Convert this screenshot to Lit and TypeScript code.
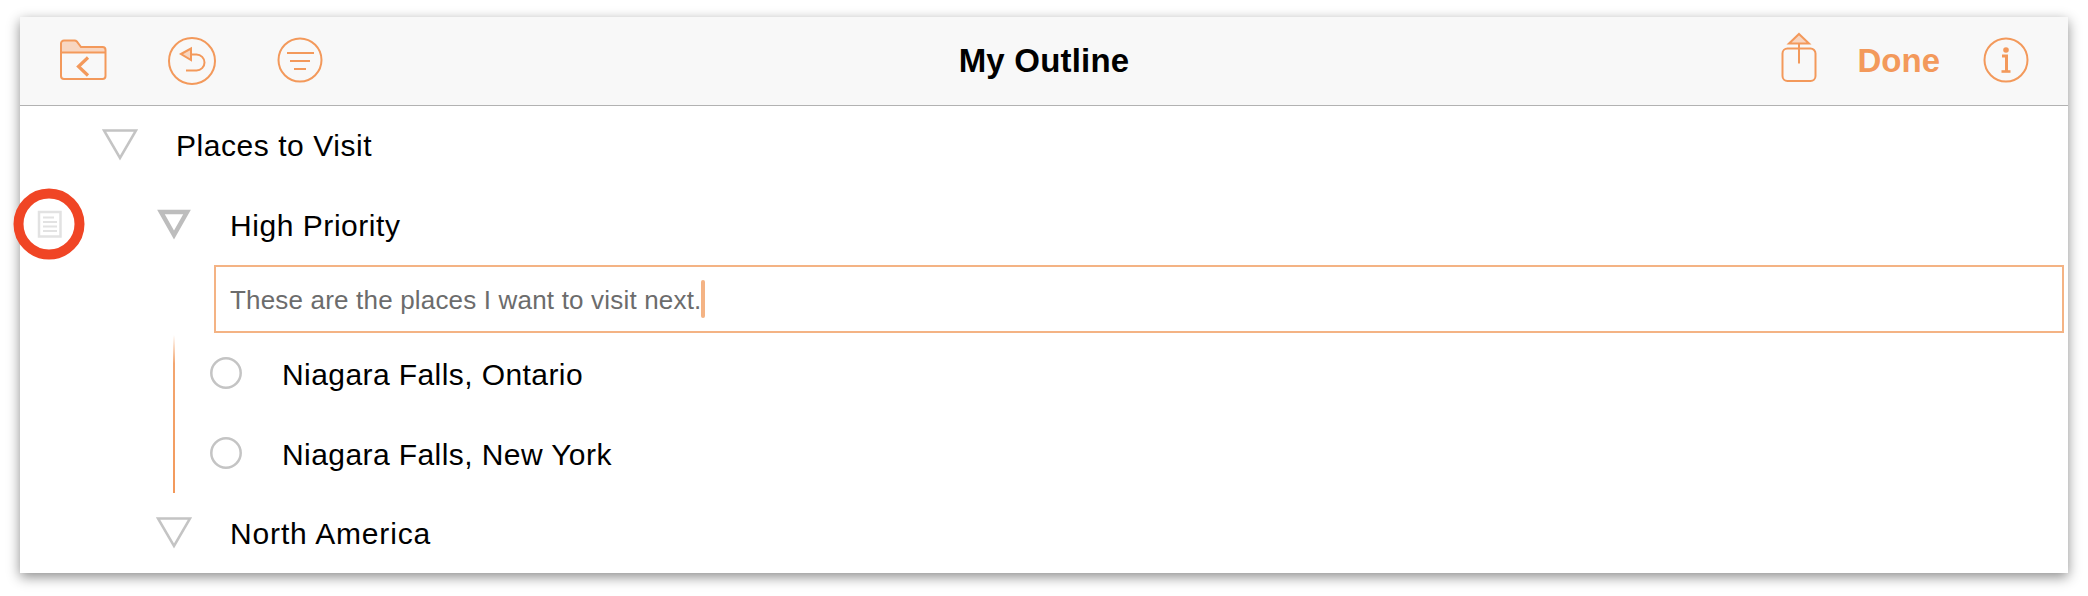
import { LitElement, html, css } from "lit";
import { customElement } from "lit/decorators.js";

@customElement("app-root")
export class AppRoot extends LitElement {
  static styles = css`
    :host { display: block; width: 2088px; height: 596px; padding: 17px 20px 23px; box-sizing: border-box; background: #fff; font-family: "Liberation Sans", Arial, sans-serif; color: #000; overflow: hidden; }
    svg { display: block; flex: none; overflow: visible; }
    .window { position: relative; height: 556px; background: #fff; box-shadow: 0 4px 12px rgba(0,0,0,.45); }
    .clip { height: 556px; overflow: hidden; }
    .bar { display: grid; grid-template-columns: 1fr auto 1fr; align-items: center; height: 88px; background: #f8f8f8; border-bottom: 1px solid #b2b2b2; padding: 0 38px; }
    .group { display: flex; align-items: center; }
    .left { gap: 60px; }
    .right { justify-content: flex-end; }
    .title { font-size: 33px; font-weight: 700; letter-spacing: .2px; }
    .done { font-size: 33px; font-weight: 700; color: #f3995b; margin: 0 42px 0 35px; }
    .ic { fill: none; stroke: #f3995b; stroke-width: 2px; }
    .tint { fill: #f8d6c1; }
    .solid { fill: #f3995b; stroke: none; }
    .row { display: flex; align-items: center; height: 80px; font-size: 30px; letter-spacing: .55px; gap: 38px; }
    .lvl1 { padding-left: 82px; }
    .lvl2 { padding-left: 136px; }
    .tri { fill: none; stroke: #c4c4c4; stroke-width: 2.5px; }
    .tri.heavy { stroke: #bdbdbd; stroke-width: 4.5px; }
    .note { display: flex; align-items: center; box-sizing: border-box; height: 68px; margin: -1px 4px 0 194px; padding-left: 14px; border: 2px solid #f4b384; font-size: 26px; color: #6c6c6c; letter-spacing: .18px; }
    .note-text { padding-top: 3px; }
    .caret { display: inline-block; width: 4px; height: 38px; border-radius: 2px; background: #f4b384; }
    .kids { display: flex; margin: 2px 0 0 153px; }
    .rail { width: 2px; height: 158px; background: linear-gradient(#fff, #f3a670 18%, #f3995b); }
    .rows { flex: none; }
    .rows .row { padding-left: 35px; gap: 40px; letter-spacing: .42px; }
    .last { margin-top: -1px; letter-spacing: .85px; }
    .dot { fill: none; stroke: #c4c4c4; stroke-width: 2.5px; }
    .mark { position: absolute; left: -7px; top: 171px; }
    .mark circle { fill: none; stroke: #f04525; stroke-width: 10px; }
    .doc { fill: none; stroke: #e2e2e2; stroke-width: 2.5px; }
  `;

  private triangle(heavy = false) {
    return html`<svg width="36" height="32" viewBox="0 0 36 32"><path class="tri ${heavy ? "heavy" : ""}" d="M${heavy ? "5 2H31L18 25" : "2 .5H34L18 28"}Z" /></svg>`;
  }

  private circle() {
    return html`<svg width="32" height="32" viewBox="0 0 32 32"><circle class="dot" cx="16" cy="14" r="14.700" /></svg>`;
  }

  render() {
    return html`
      <div class="window">
        <div class="clip">
          <header class="bar">
            <div class="group left">
              <svg width="50" height="48" viewBox="0 0 50 48">
                <path class="tint" d="M3.500 15.500V6.500a3 3 0 0 1 3-3h10a3 3 0 0 1 2.300 1L23 10h21a3 3 0 0 1 3 2v3.500Z" />
                <path class="ic" d="M3 15.500H47.500M3 6.500a3 3 0 0 1 3-3h10.500a3 3 0 0 1 2.300 1L23 10h21.500a3 3 0 0 1 3 3V39a3 3 0 0 1-3 3H6a3 3 0 0 1-3-3Z" />
                <path class="ic" style="stroke-width:3.200px" d="M30 20.500L20.500 29.500L30 38.500" />
              </svg>
              <svg width="48" height="48" viewBox="0 0 48 48">
                <circle class="ic" cx="24" cy="24" r="23" />
                <path class="tint" d="M13 17L23 11.500V23Z" />
                <path class="ic" d="M13 17L23 11.500V23ZM23 17.500h5.500a8 8 0 0 1 0 16H18" />
              </svg>
              <svg width="48" height="48" viewBox="0 0 48 48">
                <circle class="ic" cx="24" cy="23" r="21.500" />
                <path class="ic" d="M11 16H38M14 24H34M18 32H30" />
              </svg>
            </div>
            <div class="title">My Outline</div>
            <div class="group right">
              <svg width="48" height="56" viewBox="0 0 48 56">
                <path class="ic" d="M12.500 15.500H35.500a5 5 0 0 1 5 5V43a5 5 0 0 1-5 5H12.500a5 5 0 0 1-5-5V20.500a5 5 0 0 1 5-5Z" />
                <path class="tint" d="M24 1L34 10.500H14Z" />
                <path class="ic" d="M24 1L34 10.500H14ZM24 10.500V30.500" />
              </svg>
              <span class="done">Done</span>
              <svg width="48" height="48" viewBox="0 0 48 48">
                <circle class="ic" cx="24" cy="23" r="21.500" />
                <circle class="solid" cx="24" cy="13" r="2.800" />
                <path class="ic" style="stroke-width:3px" d="M20 19H24.500V34" />
                <path class="ic" style="stroke-width:2.600px" d="M19.500 34.500H28.500" />
              </svg>
            </div>
          </header>
          <div class="row lvl1">${this.triangle()}<span>Places to Visit</span></div>
          <div class="row lvl2">${this.triangle(true)}<span>High Priority</span></div>
          <div class="note"><span class="note-text">These are the places I want to visit next.</span><span class="caret"></span></div>
          <div class="kids">
            <div class="rail"></div>
            <div class="rows">
              <div class="row">${this.circle()}<span>Niagara Falls, Ontario</span></div>
              <div class="row">${this.circle()}<span>Niagara Falls, New York</span></div>
            </div>
          </div>
          <div class="row lvl2 last">${this.triangle()}<span>North America</span></div>
        </div>
        <svg class="mark" width="72" height="72" viewBox="0 0 72 72">
          <path class="doc" d="M26 24H47.500V48.500H26Z" />
          <path class="doc" style="stroke-width:2px" d="M30 29.500H41M30 34H44M30 38.500H44M30 43H44" />
          <circle cx="36" cy="36" r="30.500" />
        </svg>
      </div>
    `;
  }
}
